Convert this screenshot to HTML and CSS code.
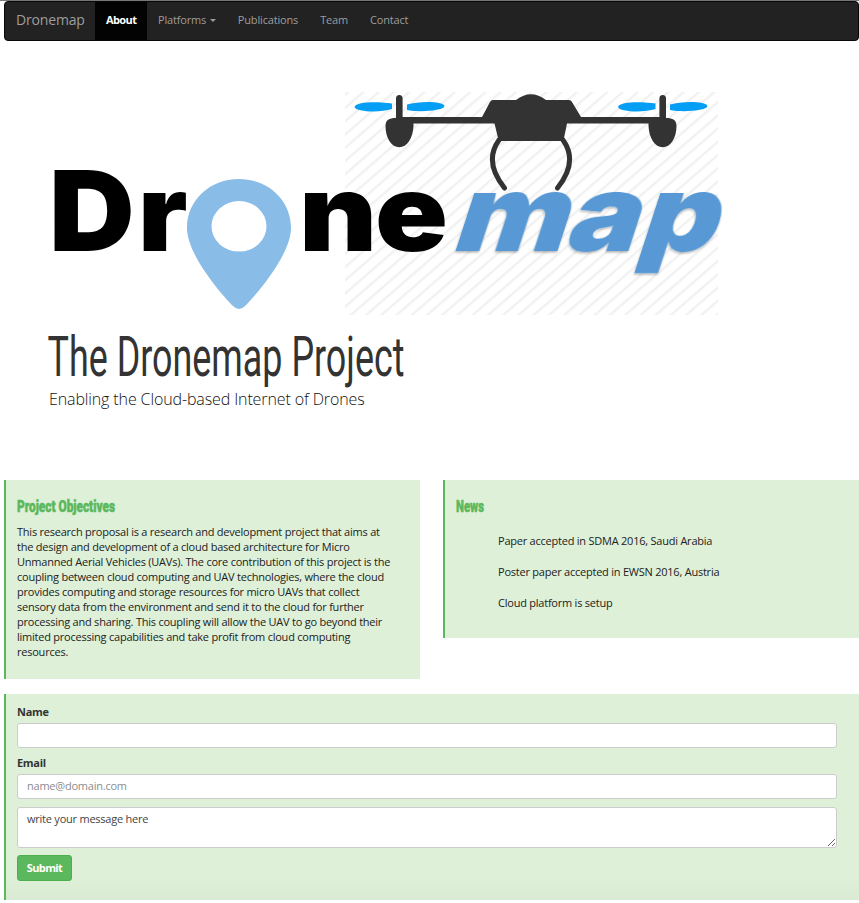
FILE: index.html
```html
<!DOCTYPE html>
<html lang="en">
<head>
<meta charset="utf-8">
<title>Dronemap</title>
<link rel="stylesheet" href="styles.css">
</head>
<body>
<nav class="navbar">
  <a class="brand">Dronemap</a>
  <a class="nav-item active">About</a>
  <a class="nav-item">Platforms <span class="caret"></span></a>
  <a class="nav-item">Publications</a>
  <a class="nav-item">Team</a>
  <a class="nav-item">Contact</a>
</nav>
<header class="hero">
  <svg class="logo" viewBox="44 86 690 236" width="690" height="236" role="img" aria-label="Dronemap">
    <defs>
      <pattern id="hatch" width="10" height="10" patternUnits="userSpaceOnUse" patternTransform="translate(345 92) rotate(-41)">
        <rect y="1" width="10" height="2.400" fill="#f1f1f1"/>
      </pattern>
      <filter id="shade" x="-10%" y="-10%" width="120%" height="130%">
        <feDropShadow dx="0" dy="1.500" stdDeviation="1.200" flood-color="#000" flood-opacity=".3"/>
      </filter>
    </defs>
    <rect x="345" y="92" width="373" height="223" fill="url(#hatch)"/>
    <g fill="#333">
      <path d="M413 117H482L490 102Q491 100 493 100H516Q531 88.500 546 100H569Q571 100 572 102L581 117H649V123.500H567L564 138Q563 141 561 141H501Q498 141 498 138L494.500 123.500H413Z"/>
      <path d="M396 118V98.500Q396 95 399.300 95T402.600 98.500V117H413.500V126C413 138 407 147.300 399.300 147.300S385.500 138 385.500 126C385.500 120 389 118 396 118Z"/>
      <path d="M666 118V98.500Q666 95 662.700 95T659.400 98.500V117H648.500V126C649 138 655 147.300 662.700 147.300S676.500 138 676.500 126C676.500 120 673 118 666 118Z"/>
    </g>
    <path d="M499 140C489 154 490 170 504.500 188M563 140C573 154 572 170 557.500 188" fill="none" stroke="#333" stroke-width="5" stroke-linecap="round"/>
    <g fill="#049ef4">
      <path id="bl" d="M392 103.500V109C380 113 356 112 354.500 107C356 101 380 101.500 392 103.500Z"/>
      <path id="br" d="M407 104.500V110C419 112.500 443 111 444.500 106C443 101 419 101 407 104.500Z"/>
      <use href="#bl" x="263.500"/>
      <use href="#br" x="263"/>
    </g>
    <path fill="#89bce6" fill-rule="evenodd" d="M239 179C268 179 291 200 291 228C291 254 258 293 245 306Q239 312 233 306C220 293 187 254 187 228C187 200 210 179 239 179ZM239 201A27.500 25.300 0 1 0 239 251.600A27.500 25.300 0 1 0 239 201Z"/>
    <g class="wordmark">
      <text transform="translate(49 251)" dx="0 3" textLength="138.500" lengthAdjust="spacingAndGlyphs">D<tspan class="low">r</tspan></text>
      <text class="low" transform="translate(299 251)" dx="0 -2" textLength="149" lengthAdjust="spacingAndGlyphs">ne</text>
      <text class="low map" filter="url(#shade)" transform="translate(449.500 251) skewX(-18)" dx="0 -1 1" textLength="264" lengthAdjust="spacingAndGlyphs">map</text>
    </g>
  </svg>
  <h1 class="title"><svg width="360" height="60"><text x="-0.500" y="44.500" textLength="357" lengthAdjust="spacingAndGlyphs">The Dronemap Project</text></svg></h1>
  <p class="tagline">Enabling the Cloud-based Internet of Drones</p>
</header>
<main>
  <div class="row">
    <section class="panel">
      <h2 class="heading"><svg width="110" height="20"><text x="0" y="15" textLength="98" lengthAdjust="spacingAndGlyphs">Project Objectives</text></svg></h2>
      <p class="copy">This research proposal is a research and development project that aims at<br>the design and development of a cloud based architecture for Micro<br>Unmanned Aerial Vehicles (UAVs). The core contribution of this project is the<br>coupling between cloud computing and UAV technologies, where the cloud<br>provides computing and storage resources for micro UAVs that collect<br>sensory data from the environment and send it to the cloud for further<br>processing and sharing. This coupling will allow the UAV to go beyond their<br>limited processing capabilities and take profit from cloud computing<br>resources.</p>
    </section>
    <section class="panel news">
      <h2 class="heading"><svg width="110" height="20"><text x="0" y="15" textLength="28" lengthAdjust="spacingAndGlyphs">News</text></svg></h2>
      <ul class="news-list">
        <li>Paper accepted in SDMA 2016, Saudi Arabia</li>
        <li>Poster paper accepted in EWSN 2016, Austria</li>
        <li>Cloud platform is setup</li>
      </ul>
    </section>
  </div>
  <form class="contact">
    <label for="name">Name</label>
    <input id="name" type="text">
    <label for="email">Email</label>
    <input id="email" type="email" placeholder="name@domain.com">
    <textarea aria-label="Message">write your message here</textarea>
    <button type="button">Submit</button>
  </form>
</main>
</body>
</html>
```
FILE: styles.css
```css
* { box-sizing: border-box; }
body {
  margin: 0;
  height: 903px;
  overflow: hidden;
  border-top: 1px solid #777;
  background: #fff;
  font: 11px/15px "Open Sans", sans-serif;
  letter-spacing: -0.23px;
  color: #222;
}
main, .navbar { margin-left: 4px; }
.navbar {
  display: flex;
  height: 40px;
  background: #222;
  border: 1px solid #080808;
  border-radius: 4px;
  color: #9d9d9d;
  letter-spacing: -0.17px;
}
.brand { width: 90px; padding: 9px 0 0 11px; font-size: 14px; line-height: 18px; }
.nav-item { padding: 10px 11px 0; }
.active { width: 52px; background: #030303; color: #fff; font-weight: 700; letter-spacing: -0.6px; }
.caret {
  display: inline-block;
  margin-left: 1px;
  vertical-align: 2px;
  border: 3px solid transparent;
  border-top-color: #9d9d9d;
  border-bottom: 0;
}
.hero { height: 439px; padding: 45px 0 0 44px; }
.logo { display: block; }
.wordmark { font: 900 111px Inter, sans-serif; letter-spacing: 0; fill: #000; }
.low { font-size: 107px; }
.map { fill: #5899d5; }
.title { margin: 9px 0 0 4px; height: 57px; letter-spacing: 0; }
.title svg, .heading svg { display: block; overflow: visible; }
.title text { font: 400 56px Roboto, sans-serif; fill: #333; }
.tagline { margin: 0 0 0 5px; font-size: 16px; line-height: 22px; font-weight: 300; letter-spacing: -0.12px; color: #111; }
.row { display: grid; grid-template-columns: 416px 416px; gap: 23px; align-items: start; }
.panel { height: 199px; padding: 17px 11px; background: #def0d8; border-left: 2px solid #5cb85c; }
.news { height: 158px; }
.heading { margin: 0; height: 27px; letter-spacing: 0; }
.heading text { font: 900 16.500px Roboto, sans-serif; fill: #5cb85c; stroke: #5cb85c; stroke-width: .5px; }
.copy { margin: 0; white-space: nowrap; }
.news-list { margin: 1px 0 0; padding: 0 0 0 42px; list-style: none; }
.news-list li { padding: 8px 0; }
.contact {
  display: flex;
  flex-direction: column;
  align-items: flex-start;
  height: 206px;
  margin-top: 15px;
  padding: 10px 22px 0 11px;
  background: linear-gradient(#def0d8 90%, #daead4);
  border-left: 2px solid #5cb85c;
}
label { font-weight: 700; color: #333; margin-bottom: 4px; letter-spacing: -0.3px; }
input, textarea {
  display: block;
  width: 100%;
  height: 25px;
  margin: 0 0 7px;
  padding: 3px 9px 5px;
  border: 1px solid #ccc;
  border-radius: 3px;
  font: inherit;
  letter-spacing: inherit;
  color: #444;
  background: #fff;
}
input::placeholder { color: #8c8c8c; }
textarea { height: 41px; margin: 1px 0 7px; }
button {
  width: 55px;
  height: 26px;
  padding: 0 0 2px;
  border: 1px solid #4cae4c;
  border-radius: 3px;
  background: #5cb85c;
  color: #fff;
  font: 700 11px/15px "Open Sans", sans-serif;
  letter-spacing: -0.6px;
}
```
